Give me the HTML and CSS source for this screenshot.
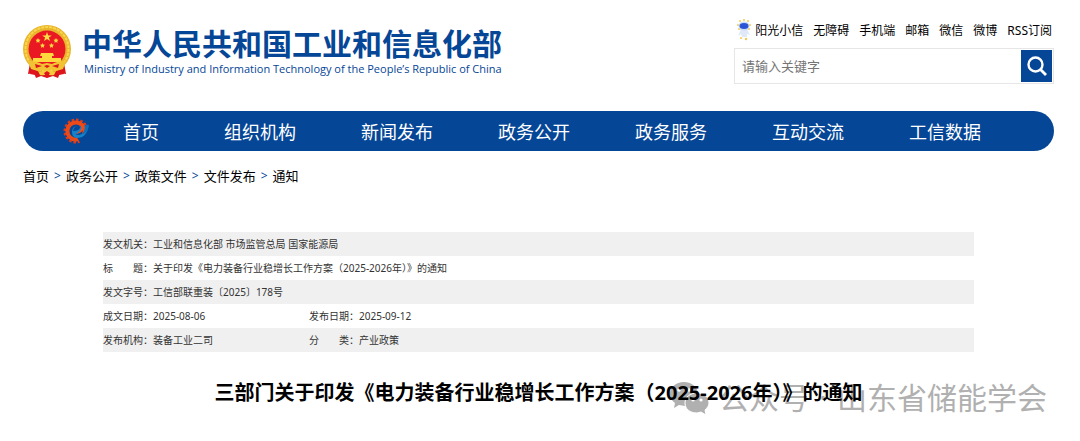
FILE: index.html
```html
<!DOCTYPE html>
<html lang="zh-CN">
<head>
<meta charset="utf-8">
<meta name="viewport" content="width=device-width, initial-scale=1">
<title>中华人民共和国工业和信息化部</title>
<link rel="stylesheet" href="styles.css">
</head>
<body>
<div class="page">
  <header class="header">
    <a class="brand" href="#">
      <svg class="emblem" viewBox="0 0 48 54" aria-hidden="true">
        <path d="M7 38 5 49l6-1 2 5 5-2 6 2 6-2 5 2 2-5 6 1-2-11z" fill="#d9141c"/>
        <ellipse cx="24" cy="24" rx="24" ry="24" fill="#e9b52c"/>
        <ellipse cx="24" cy="24" rx="21.500" ry="22" fill="none" stroke="#f8d64e" stroke-width="2" stroke-dasharray="3 1"/>
        <circle cx="24" cy="24" r="18.500" fill="#ea1822"/>
        <path d="m24 7 1.200 3.400h3.600l-2.900 2.200 1.100 3.500-3-2.100-3 2.100 1.100-3.500-2.900-2.200h3.600z" fill="#ffdf45"/>
        <g fill="#ffd83d">
          <path d="m15 13 .8 1.500 1.700.3-1.200 1.200.2 1.700-1.500-.8-1.500.8.2-1.700-1.200-1.200 1.700-.3z"/>
          <path d="m33 13 .8 1.500 1.700.3-1.200 1.200.2 1.700-1.500-.8-1.500.8.2-1.700-1.200-1.200 1.700-.3z"/>
          <path d="m19.500 18 .8 1.500 1.700.3-1.200 1.200.2 1.700-1.500-.8-1.500.8.2-1.700-1.200-1.200 1.700-.3z"/>
          <path d="m28.500 18 .8 1.500 1.700.3-1.200 1.200.2 1.700-1.500-.8-1.500.8.2-1.700-1.200-1.200 1.700-.3z"/>
          <path d="M18 28h12l1 3h-2v2h9v4H10v-4h9v-2h-2z"/>
        </g>
        <path d="M5 36q9 0 14 3l5-1 5 1q5-3 14-3l-3 8q-7 3-12 1l-4 3-4-3q-5 2-12-1z" fill="#f2c233"/>
        <path d="m12 39 7 2-6 2zm24 0-7 2 6 2zm-15 2 3-1 3 1-3 2zM8 45l8 2-4 3-5-1zm32 0-8 2 4 3 5-1z" fill="#df151d"/>
        <path d="M15 46q4 2 9-1 5 3 9 1l-2 4q-4 1-7-1-3 2-7 1z" fill="#f5cb3c"/>
        <path d="m24 46 3 2-3 5-3-5z" fill="#df151d"/>
      </svg>
      <span class="brand-text">
        <span class="brand-name">中华人民共和国工业和信息化部</span>
        <span class="brand-english">Ministry of Industry and Information Technology of the People’s Republic of China</span>
      </span>
    </a>
    <div class="tools">
      <nav class="quick-links" aria-label="快捷入口">
        <a class="quick-link mascot-link" href="#">
          <svg class="mascot" viewBox="0 0 14 22" aria-hidden="true">
            <g fill="#f7c84c"><circle cx="3" cy="2" r="1"/><circle cx="7" cy="1" r="1"/><circle cx="11" cy="2" r="1"/><circle cx="1" cy="6" r="1"/><circle cx="13" cy="6" r="1"/><circle cx="2" cy="10" r="1"/><circle cx="12" cy="10" r="1"/><circle cx="4" cy="19" r="1"/><circle cx="9" cy="20" r="1.200"/></g>
            <path d="M4 10h6l3 6-3-1v3H5l-1-3-3 2z" fill="#dfe9f8"/>
            <ellipse cx="7" cy="7" rx="5.500" ry="4.500" fill="#cbdcf8"/>
            <ellipse cx="7" cy="7" rx="4.500" ry="3" fill="#2c55d6"/>
          </svg>阳光小信</a>
        <a class="quick-link" href="#">无障碍</a>
        <a class="quick-link" href="#">手机端</a>
        <a class="quick-link" href="#">邮箱</a>
        <a class="quick-link" href="#">微信</a>
        <a class="quick-link" href="#">微博</a>
        <a class="quick-link" href="#">RSS订阅</a>
      </nav>
      <form class="search" role="search">
        <input class="search-input" type="text" placeholder="请输入关键字" aria-label="请输入关键字">
        <button class="search-button" type="button" aria-label="搜索">
          <svg class="search-icon" viewBox="0 0 20 20" aria-hidden="true"><circle cx="8.500" cy="8.500" r="7" fill="none" stroke="#fff" stroke-width="2.400"/><path d="m13.500 13.500 5.500 5.500" stroke="#fff" stroke-width="2.800"/></svg>
        </button>
      </form>
    </div>
  </header>

  <nav class="main-nav" aria-label="主导航">
    <svg class="nav-logo" viewBox="0 0 26 26" aria-hidden="true">
      <circle cx="13" cy="13" r="11.200" fill="none" stroke="#dc3a1c" stroke-width="2.600" stroke-dasharray="2.600 1.800" pathLength="70.400"/>
      <circle cx="13" cy="13" r="8.600" fill="none" stroke="#ea4a18" stroke-width="4"/>
      <path d="M18 26 13 18q8 0 10-9l4-5v22z" fill="#054696"/>
      <path d="M11 16q8 0 8-5 0-3-4-3-6 0-6 6 0 6 6 6 8 0 11-12-3 8-10 9-4 0-5-3" fill="#1583c9"/>
      <path d="M10 13q1-5 5-5 3 0 2 2-1 3-7 3" fill="#054696"/>
      <path d="M18 6q4 1 3 4-1 5-9 6 5-2 6-5 1-3-2-4z" fill="#ed4d19"/>
      <path d="M21 8q4-2 5-1-1 7-7 10 3-4 3-8z" fill="#0870bd"/>
    </svg>
    <a class="nav-link" href="#">首页</a>
    <a class="nav-link" href="#">组织机构</a>
    <a class="nav-link" href="#">新闻发布</a>
    <a class="nav-link" href="#">政务公开</a>
    <a class="nav-link" href="#">政务服务</a>
    <a class="nav-link" href="#">互动交流</a>
    <a class="nav-link" href="#">工信数据</a>
  </nav>

  <nav class="breadcrumb" aria-label="当前位置">
    <a class="crumb" href="#">首页</a><span class="crumb-mark">&gt;</span>
    <a class="crumb" href="#">政务公开</a><span class="crumb-mark">&gt;</span>
    <a class="crumb" href="#">政策文件</a><span class="crumb-mark">&gt;</span>
    <a class="crumb" href="#">文件发布</a><span class="crumb-mark">&gt;</span>
    <a class="crumb" href="#">通知</a>
  </nav>

  <main class="article">
    <table class="meta">
      <colgroup><col class="col-label"><col class="col-value"><col class="col-label"><col></colgroup>
      <tbody>
        <tr><th scope="row">发文机关：</th><td colspan="3">工业和信息化部 市场监管总局 国家能源局</td></tr>
        <tr><th scope="row">标　　题：</th><td colspan="3">关于印发《电力装备行业稳增长工作方案（2025-2026年）》的通知</td></tr>
        <tr><th scope="row">发文字号：</th><td colspan="3">工信部联重装〔2025〕178号</td></tr>
        <tr><th scope="row">成文日期：</th><td>2025-08-06</td><th scope="row">发布日期：</th><td>2025-09-12</td></tr>
        <tr><th scope="row">发布机构：</th><td>装备工业二司</td><th scope="row">分　　类：</th><td>产业政策</td></tr>
      </tbody>
    </table>
    <div class="title-area">
      <h1 class="title">三部门关于印发《电力装备行业稳增长工作方案（2025-2026年）》的通知</h1>
      <div class="watermark">
        <svg class="watermark-icon" viewBox="0 0 40 34" aria-hidden="true">
          <path d="M15 1C7 1 1 6 1 13c0 4 2 7 5 9l-1 5 5-3 6 1c-1-8 5-13 13-13C28 5 22 1 15 1z" fill="#b0b0b0"/>
          <path d="M28 12c-7 0-12 4-12 10s5 10 12 10l4-1 5 3-1-5c2-2 4-4 4-7 0-6-5-10-12-10z" fill="#b0b0b0" stroke="#fff"/>
          <g fill="#fff"><circle cx="10" cy="9" r="1.800"/><circle cx="20" cy="9" r="1.800"/><circle cx="24" cy="19" r="1.600"/><circle cx="32" cy="19" r="1.600"/></g>
        </svg>
        <span>公众号</span><span>·</span><span>山东省储能学会</span>
      </div>
    </div>
  </main>
</div>
</body>
</html>
```

FILE: styles.css
```css
* {
  box-sizing: border-box;
}

body {
  margin: 0;
  background: #fff;
  color: #000;
  font-family: "Noto Sans", "Noto Sans CJK SC", sans-serif;
  font-size: 12px;
}

a {
  color: inherit;
  text-decoration: none;
}

.page {
  padding: 18px 26px 16px 23px;
}

.header {
  display: flex;
  justify-content: space-between;
  align-items: flex-start;
  height: 93px;
}

.brand {
  display: flex;
  gap: 11px;
  padding-top: 7px;
  color: #054696;
}

.emblem {
  width: 48px;
  height: 54px;
}

.brand-text {
  display: flex;
  flex-direction: column;
  padding-top: 1px;
  white-space: nowrap;
}

.brand-name {
  font-size: 30px;
  font-weight: 700;
  line-height: 36px;
}

.brand-english {
  padding-left: 2px;
  font-family: "Open Sans", "Noto Sans", sans-serif;
  font-size: 11px;
  font-weight: 400;
  line-height: 14px;
}

.tools {
  display: flex;
  flex-direction: column;
  gap: 6px;
  width: 320px;
}

.quick-links {
  display: flex;
  justify-content: flex-end;
  align-items: center;
  gap: 10px;
  height: 24px;
  padding-right: 2px;
  white-space: nowrap;
}

.mascot-link {
  display: flex;
  align-items: center;
  gap: 4px;
}

.mascot {
  width: 14px;
  height: 22px;
}

.search {
  display: flex;
  height: 36px;
  padding: 1px;
  border: 1px solid #e6e6e6;
}

.search-input {
  flex: 1;
  min-width: 0;
  padding: 0 6px;
  border: 0;
  font: inherit;
  font-size: 13px;
}

.search-input::placeholder {
  color: #757575;
}

.search-button {
  display: grid;
  place-items: center;
  width: 31px;
  padding: 0;
  border: 0;
  background: #054696;
}

.search-icon {
  width: 20px;
  height: 20px;
}

.main-nav {
  display: flex;
  align-items: center;
  gap: 65px;
  height: 40px;
  padding-left: 39px;
  border-radius: 20px;
  background: #054696;
  color: #fff;
  font-size: 18px;
  white-space: nowrap;
}

.nav-logo {
  width: 28px;
  height: 26px;
  margin-right: -32px;
}

.breadcrumb {
  display: flex;
  gap: 5px;
  padding-top: 15px;
  font-size: 13px;
  line-height: 20px;
}

.crumb-mark {
  color: #054696;
  font-size: 12px;
}

.article {
  padding: 46px 80px 0;
}

.meta {
  width: 100%;
  border-collapse: collapse;
  table-layout: fixed;
  color: #333;
  font-size: 10px;
  line-height: 24px;
}

.meta tr:nth-child(odd) {
  background: #f0f0f0;
}

.meta th,
.meta td {
  padding: 0;
  font-weight: 400;
  text-align: left;
  white-space: nowrap;
}

.col-label {
  width: 50px;
}

.col-value {
  width: 156px;
}

.title-area {
  position: relative;
  z-index: 0;
  padding-top: 26px;
}

.title {
  margin: 0;
  font-size: 20px;
  font-weight: 700;
  line-height: 30px;
  text-align: center;
}

.watermark {
  position: absolute;
  z-index: -1;
  top: 26px;
  right: -73px;
  display: flex;
  align-items: center;
  gap: 10px;
  color: #b0b0b0;
  font-size: 30px;
  font-weight: 400;
  line-height: 40px;
  white-space: nowrap;
}

.watermark-icon {
  width: 40px;
  height: 34px;
}
```
